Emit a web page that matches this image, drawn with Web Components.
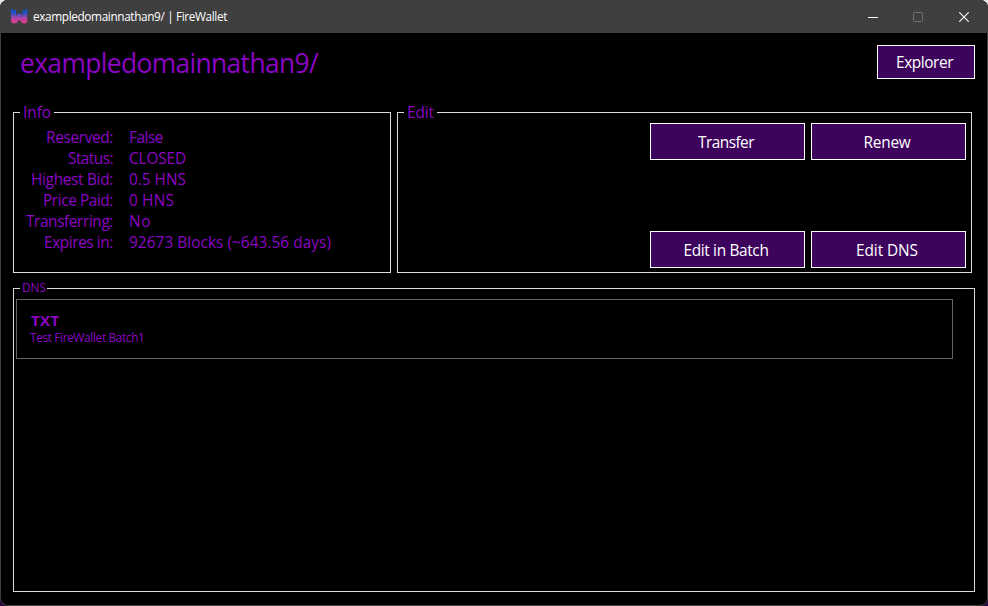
<!DOCTYPE html>
<html lang="en">
<head>
<meta charset="utf-8">
<title>exampledomainnathan9/ | FireWallet</title>
<style>
html,body{margin:0;height:100%;overflow:hidden}
body{background:linear-gradient(#e8e8e8 0 50%,#2a0845 50%);font-family:"Open Sans","Noto Sans",sans-serif}
</style>
</head>
<body>
<wallet-window></wallet-window>
<script>
const define = (name, html, init) => customElements.define(name, class extends HTMLElement {
  constructor() {
    super();
    const t = document.createElement('template');
    t.innerHTML = html;
    this.attachShadow({ mode: 'open' }).append(t.content.cloneNode(true));
  }
  connectedCallback() { if (init) init(this, this.shadowRoot); }
});

// Text tracked so that its line is exactly `w` pixels wide.
define('fit-text', `<style>:host{display:inline-block;white-space:pre}</style><span><slot></slot></span>`, (el, root) => {
  const span = root.querySelector('span');
  const w = +el.getAttribute('w');
  const natural = span.getBoundingClientRect().width;
  el.style.letterSpacing = (w - natural) / el.textContent.length + 'px';
  el.style.width = w + 'px';
});

define('title-bar', `<style>
:host{display:flex;align-items:center;height:33px;padding-right:1px;box-sizing:border-box;background:#3f3f3f;color:#fff;font-size:11.8px;line-height:16px;flex:none}
.logo{margin:0 5px 1px 11px;flex:none}
fit-text{padding-bottom:2px}
.sp{flex:1}
.ctl{width:46px;height:33px;display:grid;place-items:center}
.ctl:nth-of-type(2){width:45px}
.ctl svg{display:block}
</style>
<svg class="logo" width="17" height="16" viewBox="0 0 17 16"><defs><linearGradient id="g" x1="0" y1="0" x2="0" y2="1"><stop offset="0" stop-color="#0753d0"/><stop offset=".28" stop-color="#1c51c8"/><stop offset=".65" stop-color="#b043a4"/><stop offset="1" stop-color="#e63d8c"/></linearGradient></defs>
<path fill="url(#g)" d="M0 .2 2 2l2 .2L5 1.800V7l1-.5L8.300 4.500 10.500 6.500l1 .5V1.800l1 .4L14.500 2 16.300.2V14l-1.300 1-2 .5-2-.5-1.200-1.700-1.500-1.300-1.500 1.300L5.500 15l-2 .5-2-.5L0 14z"/></svg>
<fit-text w="194">exampledomainnathan9/ | FireWallet</fit-text>
<div class="sp"></div>
<div class="ctl"><svg width="10" height="10"><path d="M0 5.500h10" stroke="#fff"/></svg></div>
<div class="ctl"><svg width="10" height="10"><rect x=".5" y=".5" width="9" height="9" rx="1" fill="none" stroke="#707070"/></svg></div>
<div class="ctl"><svg width="10" height="10"><path d="M.2.2l9.600 9.600M9.800.2L.2 9.800" stroke="#fff" stroke-width="1.100"/></svg></div>`);

define('wallet-button', `<style>
:host{display:flex;align-items:center;justify-content:center;box-sizing:border-box;border:1px solid #fff;background:#3d045d;color:#fff;font-size:15.4px;line-height:20px;padding:2px 3px 0 0}
</style><slot></slot>`);

define('group-box', `<style>
:host{display:block;position:relative;box-sizing:border-box;border:1px solid #dcdcdc}
.legend{position:absolute;left:6px;top:-11px;line-height:22px;background:#000;padding:0 3px;font-size:15.4px}
:host([small]) .legend{font-size:11.800px;padding:0 1px 0 2px;top:-13px}
</style><div class="legend"><slot name="legend"></slot></div><slot></slot>`);

define('info-row', `<style>
:host{display:grid;grid-template-columns:99px 1fr;column-gap:16px;height:21px;line-height:21px;font-size:15.4px}
.k{text-align:right}
</style><div class="k"><slot name="key"></slot></div><div><slot></slot></div>`);

define('dns-record', `<style>
:host{display:flex;flex-direction:column;box-sizing:border-box;border:1px solid #646464;height:60px;width:937px;padding:11px 0 0 13px}
.t{font-weight:700;font-size:15px;line-height:18px;height:18px;padding-left:1px}
.v{font-size:11.800px;line-height:16px}
</style><div class="t"><slot name="type"></slot></div><div class="v"><slot></slot></div>`);

define('wallet-window', `<style>
:host{display:flex;flex-direction:column;box-sizing:border-box;width:988px;height:606px;background:#000;border-radius:8px;overflow:hidden;color:#8c04c4;box-shadow:inset 0 0 0 1px #3f3f3f}
main{flex:1;padding:12px 13px 14px;display:flex;flex-direction:column}
header{display:flex;justify-content:space-between;height:67px}
h1{margin:0;padding-left:7px;font-size:26.400px;font-weight:400;line-height:36px}
header wallet-button{width:98px;height:34px;padding:1px 3px 0 0}
.top{display:flex;gap:6px;height:161px;margin-bottom:15px}
.info{width:378px;padding-top:14px}
.edit{width:575px;padding:10px 5px 4px 252px}
.btns{display:grid;grid-template-columns:155px 155px;grid-template-rows:37px 37px;column-gap:6px;height:100%;align-content:space-between}
.dns{width:962px;height:304px;padding:10px 2px}
</style>
<title-bar></title-bar>
<main>
<header><h1><fit-text w="298">exampledomainnathan9/</fit-text></h1><wallet-button><fit-text w="57">Explorer</fit-text></wallet-button></header>
<div class="top">
<group-box class="info"><fit-text slot="legend" w="28">Info</fit-text>
<info-row><fit-text slot="key" w="67">Reserved:</fit-text><fit-text w="34">False</fit-text></info-row>
<info-row><fit-text slot="key" w="45">Status:</fit-text><fit-text w="57">CLOSED</fit-text></info-row>
<info-row><fit-text slot="key" w="82">Highest Bid:</fit-text><fit-text w="57">0.5 HNS</fit-text></info-row>
<info-row><fit-text slot="key" w="70">Price Paid:</fit-text><fit-text w="45">0 HNS</fit-text></info-row>
<info-row><fit-text slot="key" w="87">Transferring:</fit-text><fit-text w="22">No</fit-text></info-row>
<info-row><fit-text slot="key" w="69">Expires in:</fit-text><fit-text w="202">92673 Blocks (~643.56 days)</fit-text></info-row>
</group-box>
<group-box class="edit"><fit-text slot="legend" w="27">Edit</fit-text>
<div class="btns">
<wallet-button><fit-text w="56">Transfer</fit-text></wallet-button>
<wallet-button><fit-text w="47">Renew</fit-text></wallet-button>
<wallet-button><fit-text w="85">Edit in Batch</fit-text></wallet-button>
<wallet-button><fit-text w="62">Edit DNS</fit-text></wallet-button>
</div></group-box>
</div>
<group-box class="dns" small><fit-text slot="legend" w="24">DNS</fit-text>
<dns-record><fit-text slot="type" w="28.500">TXT</fit-text><fit-text w="114.500">Test FireWallet Batch1</fit-text></dns-record>
</group-box>
</main>`);
</script>
</body>
</html>
